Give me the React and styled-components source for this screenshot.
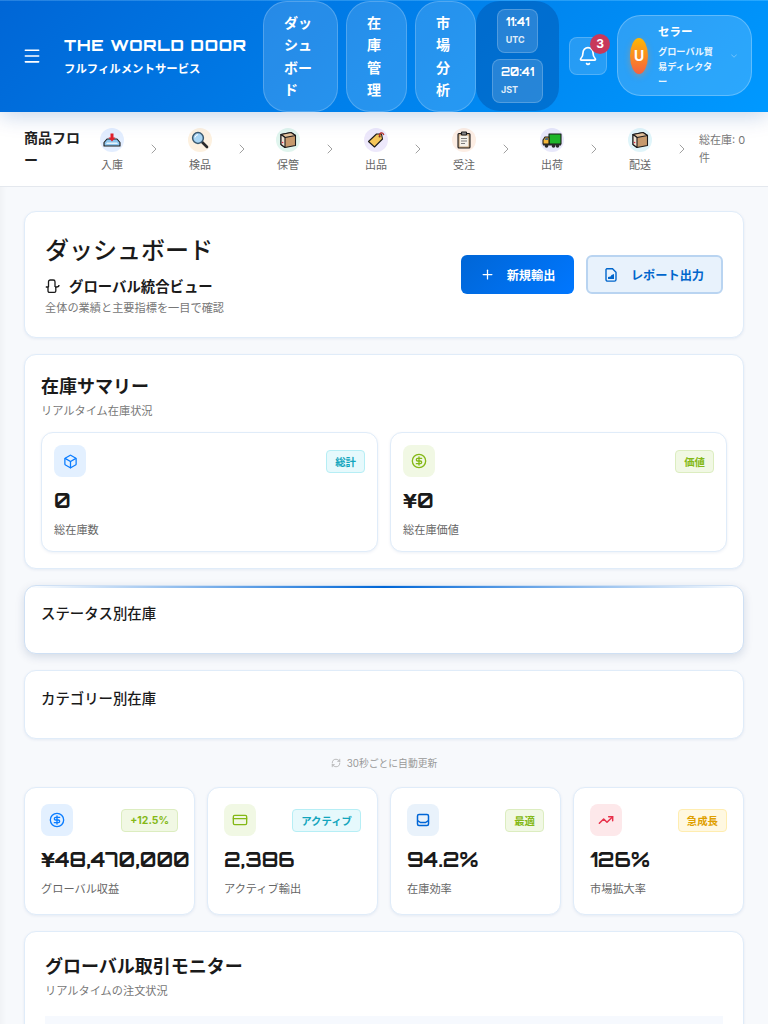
import React from 'react'
import styled, { createGlobalStyle } from 'styled-components'
import { Menu, Bell, ChevronDown, ChevronRight, Plus, Box, CircleDollarSign, CreditCard, TrendingUp, RefreshCw } from 'lucide-react'

const cjk = `"Inter", "Noto Sans CJK JP", sans-serif`
const display = `"Orbitron", "DejaVu Sans", "Noto Sans CJK JP", sans-serif`

const GlobalStyle = createGlobalStyle`
    html, body {
        margin: 0;
        padding: 0;
        background: #f7f9fc;
        font-family: ${cjk};
        color: #1a1a1a;
    }
    * {
        box-sizing: border-box;
    }
`

const Page = styled.div`
    width: 768px;
    height: 1024px;
    overflow: hidden;
`

const Header = styled.header`
    position: relative;
    z-index: 2;
    display: flex;
    align-items: center;
    height: 112px;
    padding: 0 16px 2px 22px;
    background: linear-gradient(135deg, #0066d6 0%, #0099ff 100%);
    border-top: 1px solid rgba(255, 255, 255, 0.15);
    box-shadow: 0 4px 20px rgba(0, 70, 160, 0.22);
    color: #fff;
`

const MenuButton = styled.div`
    display: flex;
    width: 20px;
    margin-right: 22px;
    flex-shrink: 0;
`

const Brand = styled.div`
    width: 199px;
    flex-shrink: 0;
`

const BrandName = styled.div`
    font-family: ${display};
    font-size: 16px;
    font-weight: 800;
    letter-spacing: 0.8px;
    line-height: 20px;
    white-space: nowrap;
`

const BrandSub = styled.div`
    margin-top: 7px;
    font-size: 11.4px;
    font-weight: 600;
    line-height: 14px;
    white-space: nowrap;
`

const Nav = styled.nav`
    display: flex;
    gap: 8px;
    height: 111px;
    align-self: flex-start;
`

const NavItem = styled.div`
    width: ${p => p.$width}px;
    padding: 10px 20px;
    border: 1px solid rgba(255, 255, 255, 0.2);
    border-radius: 24px;
    background: rgba(255, 255, 255, 0.15);
    font-size: 14px;
    font-weight: 700;
    line-height: 22.4px;
`

const ClockBox = styled.div`
    display: flex;
    flex-direction: column;
    align-items: center;
    gap: 6px;
    width: 83px;
    height: 110px;
    padding-top: 8px;
    align-self: flex-start;
    flex-shrink: 0;
    border-radius: 24px;
    background: rgba(0, 60, 140, 0.32);
`

const ClockChip = styled.div`
    padding: 3px 8px 5px;
    border: 1px solid rgba(255, 255, 255, 0.2);
    border-radius: 8px;
    background: rgba(255, 255, 255, 0.15);
`

const ClockTime = styled.div`
    font-family: ${display};
    font-size: 11px;
    font-weight: 700;
    line-height: 18px;
    white-space: nowrap;
`

const ClockZone = styled.div`
    margin-top: 2px;
    font-size: 9px;
    font-weight: 700;
    line-height: 14px;
    opacity: 0.85;
`

const BellButton = styled.div`
    position: relative;
    display: flex;
    align-items: center;
    justify-content: center;
    flex-shrink: 0;
    width: 38px;
    height: 38px;
    margin: 0 10px;
    border: 1px solid rgba(255, 255, 255, 0.2);
    border-radius: 8px;
    background: rgba(255, 255, 255, 0.15);
`

const Badge = styled.span`
    position: absolute;
    top: -4px;
    right: -4px;
    display: flex;
    align-items: center;
    justify-content: center;
    width: 20px;
    height: 20px;
    border-radius: 50%;
    background: #c8385a;
    font-size: 12px;
    font-weight: 700;
`

const UserChip = styled.div`
    display: flex;
    align-items: center;
    width: 135px;
    height: 81px;
    flex-shrink: 0;
    padding: 0 12px;
    border: 1px solid rgba(255, 255, 255, 0.25);
    border-radius: 24px;
    background: rgba(255, 255, 255, 0.17);
`

const Avatar = styled.div`
    display: flex;
    align-items: center;
    justify-content: center;
    flex-shrink: 0;
    width: 18px;
    height: 36px;
    border-radius: 50%;
    background: linear-gradient(180deg, #ffb703, #f5613f);
    box-shadow: 0 2px 6px rgba(255, 140, 40, 0.4);
    font-size: 14px;
    font-weight: 700;
`

const UserText = styled.div`
    width: 58px;
    margin-left: 10px;
`

const UserName = styled.div`
    font-size: 11.5px;
    font-weight: 700;
    line-height: 18px;
`

const UserRole = styled.div`
    margin-top: 3px;
    font-size: 9.2px;
    font-weight: 600;
    line-height: 15px;
    opacity: 0.9;
`

const UserCaret = styled.div`
    display: flex;
    margin-left: auto;
    opacity: 0.55;
`

const FlowBar = styled.div`
    position: relative;
    display: flex;
    align-items: flex-start;
    height: 75px;
    padding: 16px 24px 0;
    background: #fff;
    border-bottom: 1px solid #e4e8ee;
`

const FlowTitle = styled.div`
    width: 58px;
    margin: -1px -14px 0 0;
    flex-shrink: 0;
    font-size: 14px;
    font-weight: 700;
    line-height: 22px;
    color: #222;
`

const FlowStep = styled.div`
    position: relative;
    display: flex;
    flex-direction: column;
    align-items: center;
    flex-shrink: 0;
    width: 88px;
`

const FlowIcon = styled.div`
    display: flex;
    align-items: center;
    justify-content: center;
    width: 24px;
    height: 24px;
    border-radius: 50%;
    background: ${p => p.$bg};
`

const FlowLabel = styled.div`
    margin-top: 5px;
    font-size: 11px;
    line-height: 16px;
    color: #666;
`

const FlowArrow = styled.div`
    position: absolute;
    top: 13px;
    right: -6px;
    display: flex;
    color: #888;
`

const FlowTotal = styled.div`
    width: 48px;
    margin: 3px 0 0 15px;
    flex-shrink: 0;
    font-size: 11px;
    line-height: 18px;
    color: #777;
`

const Main = styled.main`
    display: flex;
    flex-direction: column;
    gap: 16px;
    padding: 24px;
    box-shadow: inset 8px 0 8px -8px rgba(0, 0, 0, 0.06);
`

const Card = styled.section`
    position: relative;
    padding: ${p => p.$padding || '16px'};
    background: #fff;
    border: 1px solid #e0ecf9;
    border-radius: 12px;
    box-shadow: 0 1px 3px rgba(0, 60, 140, 0.08);
`

const TitleCard = styled(Card)`
    display: flex;
    align-items: center;
    justify-content: space-between;
    height: 127px;
    padding: 0 20px;
`

const PageTitle = styled.h1`
    margin: 0;
    font-size: 24px;
    font-weight: 500;
    line-height: 36px;
`

const SubTitle = styled.div`
    display: flex;
    align-items: center;
    gap: 9px;
    margin-top: 7px;
    font-size: 14.4px;
    font-weight: 700;
    line-height: 22px;
`

const Caption = styled.div`
    font-size: 11.2px;
    line-height: 18px;
    color: ${p => p.$color || '#777'};
`

const TitleCaption = styled(Caption)`
    margin-top: 1px;
`

const Actions = styled.div`
    display: flex;
    gap: 12px;
`

const Button = styled.div`
    display: flex;
    align-items: center;
    justify-content: center;
    gap: ${p => p.$gap}px;
    width: ${p => p.$width}px;
    height: 39px;
    border-radius: 6px;
    font-size: 12.2px;
    font-weight: 700;
    background: ${p => p.$primary ? 'linear-gradient(135deg, #0066d6, #0077ff)' : '#e8f2fc'};
    color: ${p => p.$primary ? '#fff' : '#0066cc'};
    border: ${p => p.$primary ? 'none' : '2px solid #b9d4f1'};
`

const SectionTitle = styled.h2`
    margin: 1px 0 0;
    font-size: 18px;
    font-weight: 700;
    line-height: 30px;
`

const SmallTitle = styled.h3`
    margin: 0;
    font-size: 14.4px;
    font-weight: 500;
    line-height: 24px;
`

const TwoCol = styled.div`
    display: grid;
    grid-template-columns: repeat(2, minmax(0, 1fr));
    gap: 12px;
    margin-top: 12px;
`

const StatCard = styled.div`
    padding: 12px;
    height: 120px;
    background: #fff;
    border: 1px solid #e0ecf9;
    border-radius: 12px;
    box-shadow: 0 1px 3px rgba(0, 60, 140, 0.08);
`

const StatTop = styled.div`
    display: flex;
    align-items: center;
    justify-content: space-between;
`

const StatIcon = styled.div`
    display: flex;
    align-items: center;
    justify-content: center;
    width: 32px;
    height: 32px;
    border-radius: 8px;
    background: ${p => p.$bg};
    color: ${p => p.$color};
`

const Tag = styled.span`
    display: inline-flex;
    align-items: center;
    height: 23px;
    padding: 0 8px;
    border: 1px solid ${p => p.$border};
    border-radius: 4px;
    background: ${p => p.$bg};
    color: ${p => p.$color};
    font-size: 10.4px;
    font-weight: 700;
    white-space: nowrap;
`

const StatValue = styled.div`
    margin-top: 10px;
    font-family: ${display};
    font-size: 20px;
    font-weight: 700;
    line-height: 28px;
    white-space: nowrap;
`

const StatLabel = styled.div`
    margin-top: 6px;
    font-size: 11.2px;
    line-height: 18px;
    color: #666;
`

const BarCard = styled(Card)`
    height: 69px;
    box-shadow: 0 3px 10px rgba(0, 40, 100, 0.14);
    border-color: #cfe0f4;
    overflow: hidden;

    &::before {
        content: '';
        position: absolute;
        top: 0;
        left: 0;
        right: 0;
        height: 2px;
        background: linear-gradient(90deg, transparent, #0066d6 50%, transparent);
    }
`

const PlainCard = styled(Card)`
    height: 69px;
`

const AutoRefresh = styled.div`
    display: flex;
    align-items: center;
    justify-content: center;
    gap: 6px;
    height: 16px;
    font-size: 9.8px;
    color: #999;
`

const KpiGrid = styled.div`
    display: grid;
    grid-template-columns: repeat(4, minmax(0, 1fr));
    gap: 12px;
`

const KpiCard = styled(StatCard)`
    height: 128px;
    padding: 16px;
`

const TableHead = styled.div`
    height: 40px;
    margin-top: 16px;
    background: #f6f9fe;
`

// small colour drawings for the flow steps
const outline = { stroke: '#1c1c1c', strokeWidth: 1.1, strokeLinejoin: 'round' }

const TrayGlyph = () => (
    <svg width="18" height="18" viewBox="0 0 18 18">
        <path d="M1 11.5 L4 8 H14 L17 11.5 V15 H1 Z" fill="#8ec6ee" {...outline} />
        <path d="M4 11.5 H14 L15 13 H3 Z" fill="#e6f3fc" />
        <path d="M7.5 2.5 H10.5 V6.5 H12.5 L9 10.5 L5.5 6.5 H7.5 Z" fill="#e0202c" />
    </svg>
)

const LensGlyph = () => (
    <svg width="18" height="18" viewBox="0 0 18 18">
        <path d="M10.5 10.5 L16 16" stroke="#2a2a2a" strokeWidth="2.6" strokeLinecap="round" />
        <circle cx="7" cy="7" r="5.4" fill="#a9d6f5" stroke="#3c5a70" strokeWidth="1.5" />
        <path d="M4 6.5 A3.5 3.5 0 0 1 7 3.6" fill="none" stroke="#fff" strokeWidth="1" />
    </svg>
)

const BoxGlyph = () => (
    <svg width="18" height="18" viewBox="0 0 18 18">
        <path d="M2 3.5 L12 1.5 L16.5 4.5 V14.5 L6 16.5 L2 13.5 Z" fill="#c69a6d" {...outline} />
        <path d="M2 3.5 L6 6.5 L16.5 4.5 L12 1.5 Z" fill="#e4c39c" {...outline} />
        <path d="M2 3.5 L6 6.5 V16.5 L2 13.5 Z" fill="#f1e5d6" {...outline} />
        <circle cx="3.6" cy="11.5" r="0.8" fill="#e0304a" />
    </svg>
)

const TagGlyph = () => (
    <svg width="18" height="18" viewBox="0 0 18 18">
        <path d="M1.5 10.5 L9.5 3 H14.5 L15.5 8 L7.5 16 Z" fill="#f5c65a" {...outline} />
        <circle cx="12.6" cy="5.4" r="1" fill="#5a3a20" />
        <path d="M12.6 5.4 C12 1.5 16 0.5 16.8 4" fill="none" stroke="#b8302a" strokeWidth="1.3" />
    </svg>
)

const ClipboardGlyph = () => (
    <svg width="18" height="18" viewBox="0 0 18 18">
        <rect x="3" y="2.5" width="12" height="14.5" rx="1" fill="#c9a77e" {...outline} />
        <rect x="4.6" y="4.5" width="8.8" height="11" fill="#f4f1ea" />
        <rect x="6.5" y="1" width="5" height="3" rx="0.6" fill="#8a8a8a" {...outline} />
        <path d="M6 7.5 H12 M6 10 H12 M6 12.5 H10" stroke="#7d7d7d" strokeWidth="1" />
    </svg>
)

const TruckGlyph = () => (
    <svg width="20" height="18" viewBox="0 0 20 18">
        <rect x="7" y="3" width="12" height="10" fill="#1fb52b" {...outline} />
        <path d="M1 13 V9 L3 6 H7 V13 Z" fill="#f5b73c" {...outline} />
        <path d="M2.6 9 L3.6 7 H6 V9 Z" fill="#4d6a80" />
        <path d="M1 13 H19 V14.5 H1 Z" fill="#2a2a2a" />
        <circle cx="4.5" cy="15" r="1.8" fill="#2a2a2a" />
        <circle cx="11.5" cy="15" r="1.8" fill="#2a2a2a" />
        <circle cx="15.5" cy="15" r="1.8" fill="#2a2a2a" />
    </svg>
)

const GlobalViewIcon = () => (
    <svg width="15" height="15" viewBox="0 0 15 15" fill="none" stroke="#1a1a1a" strokeWidth="1.3" strokeLinejoin="round">
        <path d="M3.5 8 V2.8 A1.8 1.8 0 0 1 5.3 1 H8.2 A1.8 1.8 0 0 1 10 2.8 V8" />
        <path d="M0.8 8 H3.5 M10 8 H11.5 C13 8 14 7.2 14 6" />
        <path d="M3 8 V12 A1.4 1.4 0 0 0 4.4 13.4 H9.4 A1.4 1.4 0 0 0 10.8 12 V8" />
    </svg>
)

const InboxIcon = () => (
    <svg width="14" height="14" viewBox="0 0 14 14" fill="none" stroke="currentColor" strokeWidth="1.5">
        <rect x="1.5" y="1.5" width="11" height="11" rx="1.5" />
        <path d="M1.5 7.5 L4.5 9.5 H9.5 L12.5 7.5" />
    </svg>
)

const ReportIcon = () => (
    <svg width="12" height="14" viewBox="0 0 12 14" fill="none">
        <path d="M1.8 0.8 H7.5 L11 4.3 V11.5 A1.6 1.6 0 0 1 9.4 13.1 H2.6 A1.6 1.6 0 0 1 1 11.5 V1.6 Z" stroke="#0066cc" strokeWidth="1.4" />
        <path d="M3 11 V9 L5.5 8.5 L6.5 7 L9 6 V11 Z" fill="#0066cc" />
    </svg>
)

const stepList = [
    { label: '入庫', glyph: <TrayGlyph />, bg: '#e3eeff' },
    { label: '検品', glyph: <LensGlyph />, bg: '#fdf1e0' },
    { label: '保管', glyph: <BoxGlyph />, bg: '#e0f5ee' },
    { label: '出品', glyph: <TagGlyph />, bg: '#ede8fb' },
    { label: '受注', glyph: <ClipboardGlyph />, bg: '#fdeee4' },
    { label: '出荷', glyph: <TruckGlyph />, bg: '#e8e8fb' },
    { label: '配送', glyph: <BoxGlyph />, bg: '#e0f5fa' },
]

const green = { $bg: '#f1f8e4', $border: '#dcedc0', $color: '#84b816' }
const cyan = { $bg: '#e6f9fc', $border: '#b6eef5', $color: '#12a5bd' }
const amber = { $bg: '#fff8e1', $border: '#ffedb0', $color: '#dfa000' }

const kpis = [
    { value: '¥48,470,000', label: 'グローバル収益', tag: '+12.5%', tone: green, bg: '#e3f0ff', color: '#0a7cff', icon: <CircleDollarSign size={16} strokeWidth={2} /> },
    { value: '2,386', label: 'アクティブ輸出', tag: 'アクティブ', tone: cyan, bg: '#f1f8e4', color: '#84b816', icon: <CreditCard size={16} strokeWidth={2} /> },
    { value: '94.2%', label: '在庫効率', tag: '最適', tone: green, bg: '#e9f2fb', color: '#0066d6', icon: <InboxIcon /> },
    { value: '126%', label: '市場拡大率', tag: '急成長', tone: amber, bg: '#fde8ea', color: '#e8304a', icon: <TrendingUp size={16} strokeWidth={2.2} /> },
]

const App = () => {
    const steps = stepList.map((step, i) => {
        return (
            <FlowStep key={step.label + i}>
                <FlowIcon $bg={step.bg}>{step.glyph}</FlowIcon>
                <FlowLabel>{step.label}</FlowLabel>
                <FlowArrow><ChevronRight size={16} strokeWidth={1.2} /></FlowArrow>
            </FlowStep>
        )
    })

    return (
        <Page>
            <GlobalStyle />
            <Header>
                <MenuButton><Menu size={20} strokeWidth={1.9} /></MenuButton>
                <Brand>
                    <BrandName>THE WORLD DOOR</BrandName>
                    <BrandSub>フルフィルメントサービス</BrandSub>
                </Brand>
                <Nav>
                    <NavItem $width={75}>ダッシュボード</NavItem>
                    <NavItem $width={61}>在庫管理</NavItem>
                    <NavItem $width={61}>市場分析</NavItem>
                </Nav>
                <ClockBox>
                    <ClockChip>
                        <ClockTime>11:41</ClockTime>
                        <ClockZone>UTC</ClockZone>
                    </ClockChip>
                    <ClockChip>
                        <ClockTime>20:41</ClockTime>
                        <ClockZone>JST</ClockZone>
                    </ClockChip>
                </ClockBox>
                <BellButton>
                    <Bell size={20} strokeWidth={2} />
                    <Badge>3</Badge>
                </BellButton>
                <UserChip>
                    <Avatar>U</Avatar>
                    <UserText>
                        <UserName>セラー</UserName>
                        <UserRole>グローバル貿易ディレクター</UserRole>
                    </UserText>
                    <UserCaret><ChevronDown size={10} strokeWidth={1.5} /></UserCaret>
                </UserChip>
            </Header>
            <FlowBar>
                <FlowTitle>商品フロー</FlowTitle>
                {steps}
                <FlowTotal>総在庫: 0 件</FlowTotal>
            </FlowBar>
            <Main>
                <TitleCard>
                    <div>
                        <PageTitle>ダッシュボード</PageTitle>
                        <SubTitle><GlobalViewIcon />グローバル統合ビュー</SubTitle>
                        <TitleCaption>全体の業績と主要指標を一目で確認</TitleCaption>
                    </div>
                    <Actions>
                        <Button $primary $width={113} $gap={12}><Plus size={15} strokeWidth={2} />新規輸出</Button>
                        <Button $width={137} $gap={14}><ReportIcon />レポート出力</Button>
                    </Actions>
                </TitleCard>
                <Card>
                    <SectionTitle>在庫サマリー</SectionTitle>
                    <Caption>リアルタイム在庫状況</Caption>
                    <TwoCol>
                        <StatCard>
                            <StatTop>
                                <StatIcon $bg="#e3f0ff" $color="#0a7cff"><Box size={15} strokeWidth={2} /></StatIcon>
                                <Tag {...cyan}>総計</Tag>
                            </StatTop>
                            <StatValue>0</StatValue>
                            <StatLabel>総在庫数</StatLabel>
                        </StatCard>
                        <StatCard>
                            <StatTop>
                                <StatIcon $bg="#f1f8e4" $color="#84b816"><CircleDollarSign size={16} strokeWidth={2} /></StatIcon>
                                <Tag {...green}>価値</Tag>
                            </StatTop>
                            <StatValue>¥0</StatValue>
                            <StatLabel>総在庫価値</StatLabel>
                        </StatCard>
                    </TwoCol>
                </Card>
                <BarCard>
                    <SmallTitle>ステータス別在庫</SmallTitle>
                </BarCard>
                <PlainCard>
                    <SmallTitle>カテゴリー別在庫</SmallTitle>
                </PlainCard>
                <AutoRefresh><RefreshCw size={10} strokeWidth={1.5} />30秒ごとに自動更新</AutoRefresh>
                <KpiGrid>
                    {kpis.map(kpi => (
                        <KpiCard key={kpi.label}>
                            <StatTop>
                                <StatIcon $bg={kpi.bg} $color={kpi.color}>{kpi.icon}</StatIcon>
                                <Tag {...kpi.tone}>{kpi.tag}</Tag>
                            </StatTop>
                            <StatValue>{kpi.value}</StatValue>
                            <StatLabel>{kpi.label}</StatLabel>
                        </KpiCard>
                    ))}
                </KpiGrid>
                <Card $padding="19px 20px">
                    <SectionTitle>グローバル取引モニター</SectionTitle>
                    <Caption>リアルタイムの注文状況</Caption>
                    <TableHead />
                </Card>
            </Main>
        </Page>
    )
}

export default App
